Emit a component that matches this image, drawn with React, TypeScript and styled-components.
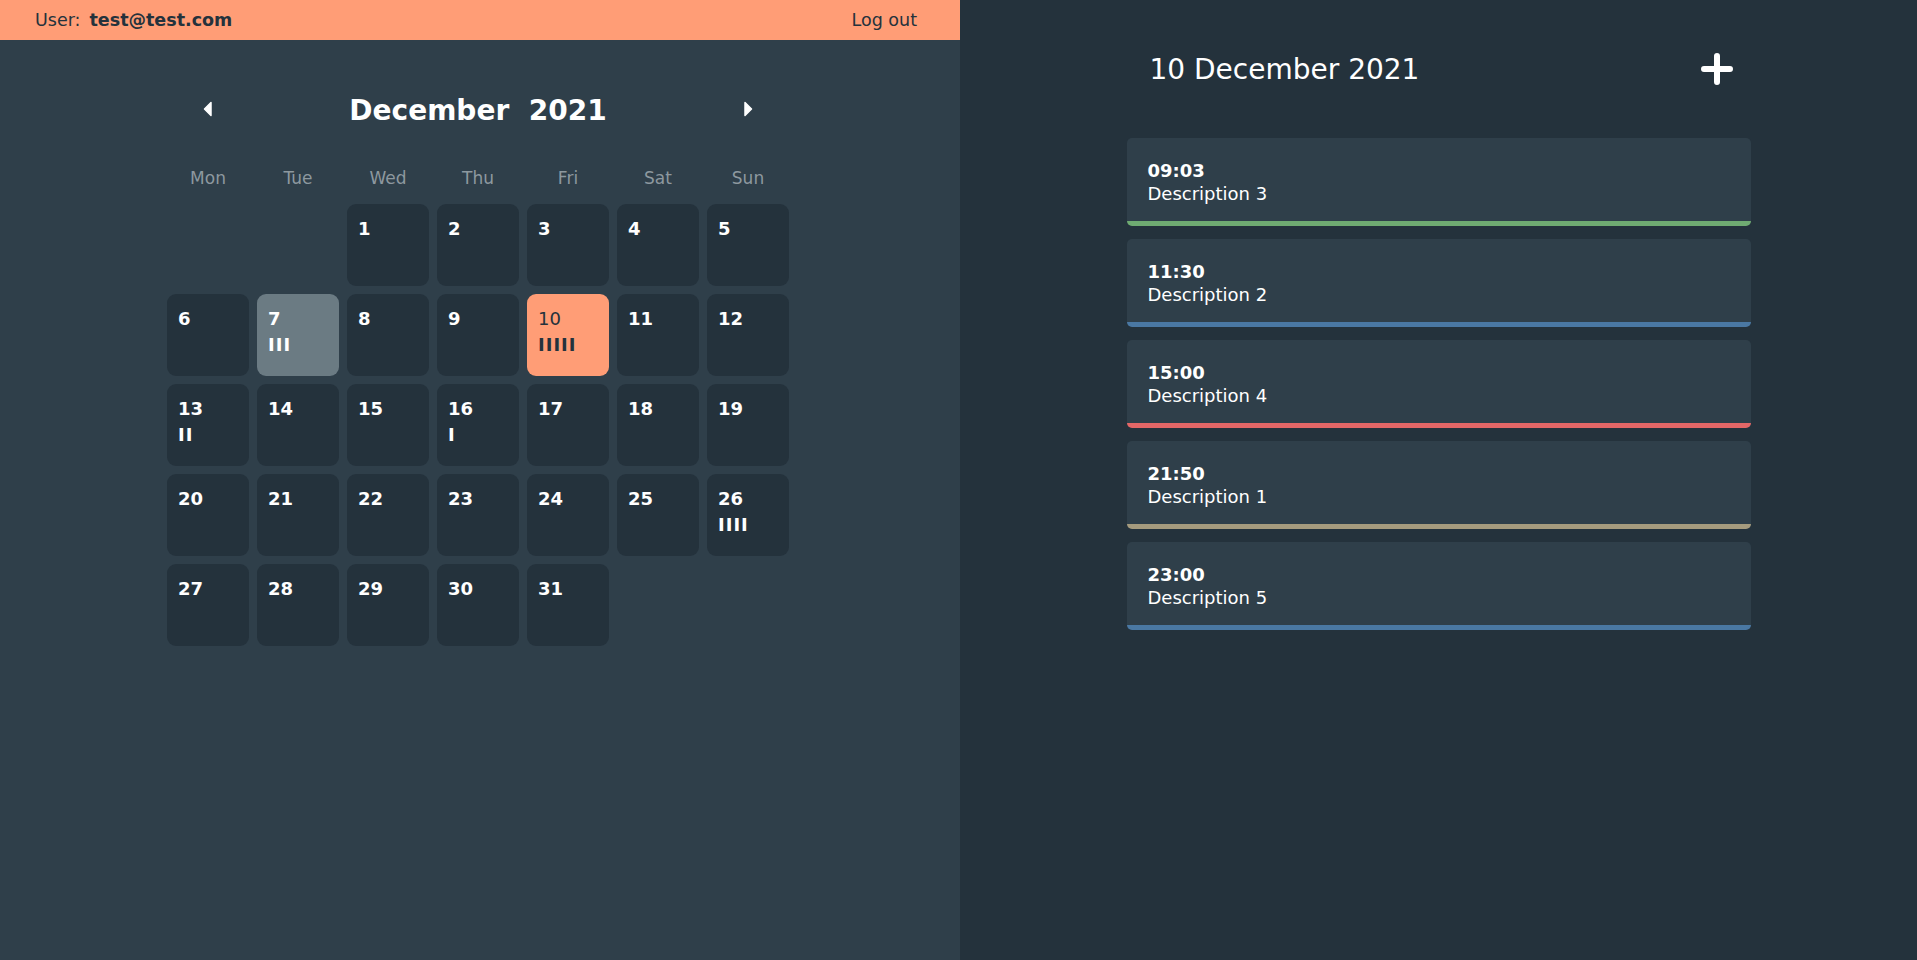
import React from "react";
import styled, { createGlobalStyle } from "styled-components";

const GlobalStyle = createGlobalStyle`
  html, body { margin: 0; padding: 0; }
  body { font-family: "DejaVu Sans", "Open Sans", sans-serif; background: #24323c; }
  * { box-sizing: border-box; }
`;

const Page = styled.div`
  display: flex;
  width: 100%;
  height: 960px;
`;

const LeftPanel = styled.section`
  width: 960px;
  flex: 0 0 960px;
  background: #2f3f4a;
  display: flex;
  flex-direction: column;
`;

const TopBar = styled.header`
  height: 40px;
  background: #ff9d76;
  display: flex;
  align-items: center;
  justify-content: space-between;
  padding: 0 43px 0 35px;
  color: #24323c;
  font-size: 17.5px;
`;

const UserInfo = styled.div`
  display: flex;
  gap: 9px;
`;

const Email = styled.span`
  font-weight: 600;
`;

const LogOut = styled.button`
  background: none;
  border: none;
  padding: 0;
  font: inherit;
  color: inherit;
  cursor: pointer;
`;

const Calendar = styled.div`
  width: 622px;
  margin: 49px 0 0 167px;
  display: flex;
  flex-direction: column;
`;

const SevenCols = styled.div`
  display: grid;
  grid-template-columns: repeat(7, 82px);
  column-gap: 8px;
`;

const NavRow = styled(SevenCols)`
  height: 40px;
  align-items: center;
`;

const ArrowButton = styled.button<{ $col: number }>`
  grid-column: ${(p) => p.$col};
  background: none;
  border: none;
  padding: 0;
  display: flex;
  justify-content: center;
  align-items: center;
  cursor: pointer;
`;

const MonthTitle = styled.h1`
  grid-column: 2 / 7;
  margin: 0;
  text-align: center;
  color: #ffffff;
  font-size: 28px;
  font-weight: 700;
  white-space: pre;
  transform: translateY(1px);
`;

const WeekRow = styled(SevenCols)`
  margin-top: 39px;
  height: 20px;
  align-items: center;
`;

const WeekDay = styled.div`
  text-align: center;
  color: #8d989f;
  font-size: 17px;
`;

const DaysGrid = styled(SevenCols)`
  margin-top: 16px;
  grid-auto-rows: 82px;
  row-gap: 8px;
`;

type Variant = "normal" | "today" | "selected";

const DayCell = styled.div<{ $variant: Variant; $start?: number }>`
  ${(p) => (p.$start ? `grid-column-start: ${p.$start};` : "")}
  border-radius: 9px;
  padding: 12px 11px;
  display: flex;
  flex-direction: column;
  font-weight: 700;
  font-size: 18px;
  line-height: 26px;
  background: ${(p) =>
    p.$variant === "selected" ? "#ff9d76" : p.$variant === "today" ? "#6b7b83" : "#24323c"};
  color: ${(p) => (p.$variant === "selected" ? "#24323c" : "#ffffff")};
`;

const DayNum = styled.span<{ $light?: boolean }>`
  font-weight: ${(p) => (p.$light ? 400 : 700)};
`;

const Tally = styled.span`
  font-weight: 700;
  letter-spacing: 1px;
`;

const RightPanel = styled.section`
  flex: 1;
  background: #24323c;
  display: flex;
  flex-direction: column;
  align-items: center;
`;

const DayHeader = styled.div`
  width: 624px;
  margin-top: 49px;
  height: 40px;
  display: flex;
  align-items: center;
  justify-content: space-between;
  padding: 0 17px 0 23px;
`;

const DayTitle = styled.h2`
  margin: 0;
  color: #ffffff;
  font-size: 28px;
  font-weight: 400;
`;

const AddButton = styled.button`
  background: none;
  border: none;
  padding: 0;
  display: flex;
  cursor: pointer;
`;

const EventList = styled.div`
  width: 624px;
  margin-top: 49px;
  display: flex;
  flex-direction: column;
  gap: 13px;
`;

const EventCard = styled.div<{ $color: string }>`
  height: 88px;
  background: #2f3f4a;
  border-radius: 5px;
  border-bottom: 5px solid ${(p) => p.$color};
  padding: 22px 21px 0;
  display: flex;
  flex-direction: column;
  color: #ffffff;
`;

const EventTime = styled.span`
  font-weight: 700;
  font-size: 18px;
  line-height: 22px;
`;

const EventDesc = styled.span`
  font-size: 18px;
  line-height: 24px;
`;

const CaretLeft = () => (
  <svg width="10" height="16" viewBox="0 0 10 16">
    <path d="M8 1.5 L1.5 8 L8 14.5 Z" fill="#ffffff" stroke="#ffffff" strokeWidth="1.5" strokeLinejoin="round" />
  </svg>
);

const CaretRight = () => (
  <svg width="10" height="16" viewBox="0 0 10 16">
    <path d="M2 1.5 L8.5 8 L2 14.5 Z" fill="#ffffff" stroke="#ffffff" strokeWidth="1.5" strokeLinejoin="round" />
  </svg>
);

const PlusIcon = () => (
  <svg width="34" height="34" viewBox="0 0 34 34">
    <path d="M17 4 V30 M4 17 H30" stroke="#ffffff" strokeWidth="6" strokeLinecap="round" />
  </svg>
);

const weekdays = ["Mon", "Tue", "Wed", "Thu", "Fri", "Sat", "Sun"];
const tallies: Record<number, number> = { 7: 3, 10: 5, 13: 2, 16: 1, 26: 4 };

const events = [
  { time: "09:03", desc: "Description 3", color: "#6fab72" },
  { time: "11:30", desc: "Description 2", color: "#4a78a3" },
  { time: "15:00", desc: "Description 4", color: "#e46767" },
  { time: "21:50", desc: "Description 1", color: "#a59b7e" },
  { time: "23:00", desc: "Description 5", color: "#4a78a3" },
];

export default function App() {
  const days = Array.from({ length: 31 }, (_, i) => i + 1);
  return (
    <>
      <GlobalStyle />
      <Page>
        <LeftPanel>
          <TopBar>
            <UserInfo>
              <span>User:</span>
              <Email>test@test.com</Email>
            </UserInfo>
            <LogOut>Log out</LogOut>
          </TopBar>
          <Calendar>
            <NavRow>
              <ArrowButton $col={1}>
                <CaretLeft />
              </ArrowButton>
              <MonthTitle>{"December  2021"}</MonthTitle>
              <ArrowButton $col={7}>
                <CaretRight />
              </ArrowButton>
            </NavRow>
            <WeekRow>
              {weekdays.map((d) => (
                <WeekDay key={d}>{d}</WeekDay>
              ))}
            </WeekRow>
            <DaysGrid>
              {days.map((d) => {
                const variant: Variant = d === 10 ? "selected" : d === 7 ? "today" : "normal";
                return (
                  <DayCell key={d} $variant={variant} $start={d === 1 ? 3 : undefined}>
                    <DayNum $light={d === 10}>{d}</DayNum>
                    {tallies[d] ? <Tally>{"I".repeat(tallies[d])}</Tally> : null}
                  </DayCell>
                );
              })}
            </DaysGrid>
          </Calendar>
        </LeftPanel>
        <RightPanel>
          <DayHeader>
            <DayTitle>10 December 2021</DayTitle>
            <AddButton>
              <PlusIcon />
            </AddButton>
          </DayHeader>
          <EventList>
            {events.map((e) => (
              <EventCard key={e.time} $color={e.color}>
                <EventTime>{e.time}</EventTime>
                <EventDesc>{e.desc}</EventDesc>
              </EventCard>
            ))}
          </EventList>
        </RightPanel>
      </Page>
    </>
  );
}
